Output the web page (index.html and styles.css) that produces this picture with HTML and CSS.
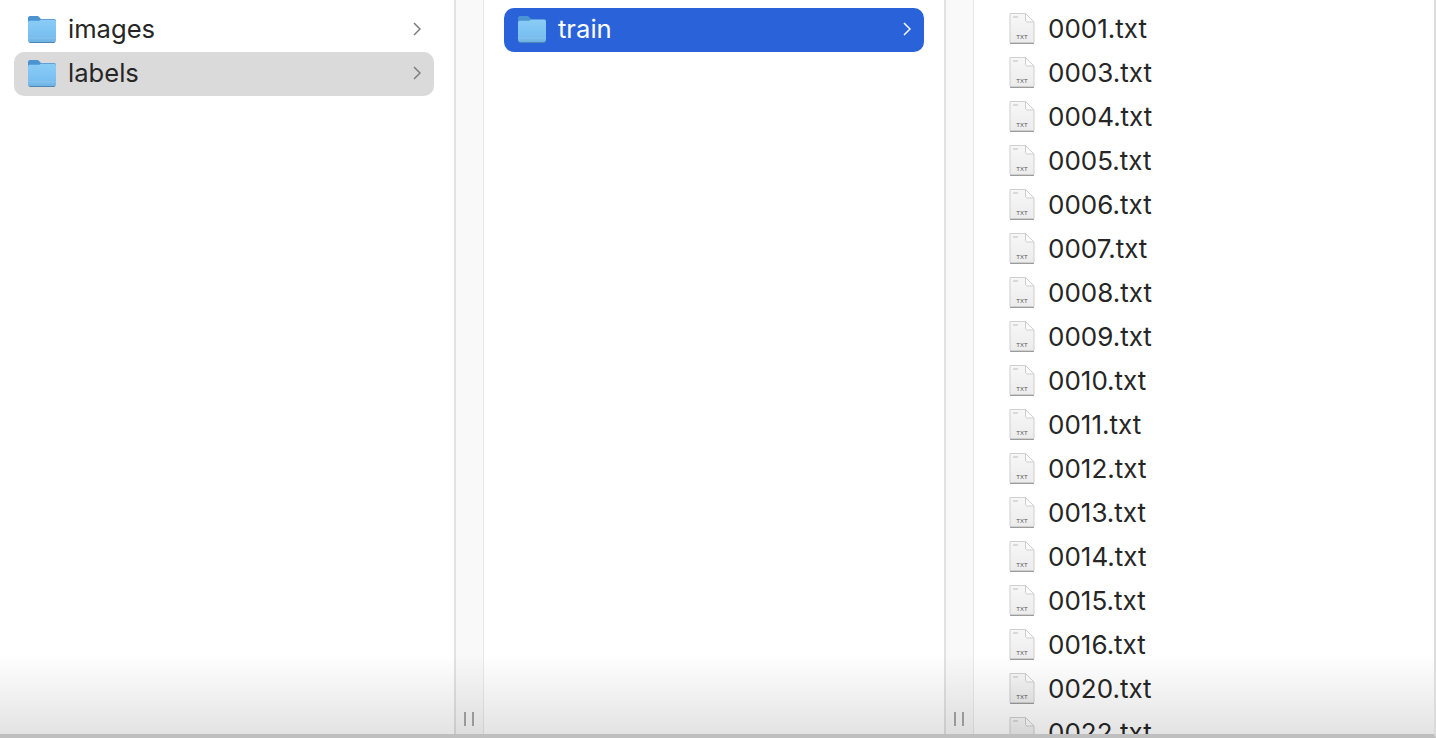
FILE: index.html
```html
<!DOCTYPE html>
<html lang="en">
<head>
    <meta charset="UTF-8">
    <meta name="viewport" content="width=device-width, initial-scale=1.0">
    <title>Finder</title>
    <link rel="stylesheet" href="styles.css">
</head>
<body>
    <!-- Shared icons -->
    <svg class="defs" width="0" height="0">
        <defs>
            <linearGradient id="folderFront" x1="0" y1="0" x2="0" y2="1">
                <stop offset="0" stop-color="#8accf5"/>
                <stop offset="0.72" stop-color="#79c0f1"/>
                <stop offset="0.74" stop-color="#69aee2"/>
                <stop offset="0.76" stop-color="#84c4f0"/>
                <stop offset="1" stop-color="#6cb1e3"/>
            </linearGradient>
            <linearGradient id="filePaper" x1="0" y1="0" x2="0" y2="1">
                <stop offset="0" stop-color="#f7f7f7"/>
                <stop offset="1" stop-color="#ececec"/>
            </linearGradient>
            <symbol id="folder" viewBox="0 0 30 28">
                <path d="M1 6.500V3.200C1 2 1.800 1 3 1h7c1 0 1.600.4 2.300 1.200L14 4h13c1.200 0 2 .8 2 2v2H1z" fill="#4c93d2"/>
                <path d="M1 8c0-1.500.9-2.300 2-2.300h8.500c1 0 1.500-.3 2.200-1h13.300c1.200 0 2 .8 2 2V25c0 1.200-.8 2-2 2H3c-1.200 0-2-.8-2-2z" fill="url(#folderFront)"/>
                <path d="M1.500 26.600c.4.600 1 .9 1.500.9h24c.6 0 1.200-.3 1.500-.9" fill="none" stroke="#4f86b8" stroke-width="1"/>
            </symbol>
            <symbol id="file" viewBox="0 0 26 32">
                <path d="M1 1.500h15.500L25 10v20.500H1z" fill="url(#filePaper)" stroke="#cfcfcf" stroke-width="1"/>
                <path d="M16.500 1.500V8c0 1.300.7 2 2 2H25z" fill="#fdfdfd" stroke="#cfcfcf" stroke-width="1"/>
                <path d="M1 31.500h24" stroke="#9c9c9c" stroke-width="1"/>
                <path d="M4 5h5" stroke="#bdbdbd" stroke-width="1"/>
                <text x="13" y="27" text-anchor="middle" font-family="Liberation Sans, sans-serif" font-size="6" fill="#555">TXT</text>
            </symbol>
        </defs>
    </svg>

    <div class="finder">
        <div class="column column-first">
            <div class="row">
                <svg class="folder-icon"><use href="#folder"/></svg>
                <span class="name">images</span>
                <span class="chevron"><svg width="8" height="14" viewBox="0 0 8 14"><path d="M1 1l6 6-6 6"/></svg></span>
            </div>
            <div class="row row-inactive">
                <svg class="folder-icon"><use href="#folder"/></svg>
                <span class="name">labels</span>
                <span class="chevron"><svg width="8" height="14" viewBox="0 0 8 14"><path d="M1 1l6 6-6 6"/></svg></span>
            </div>
        </div>
        <div class="gutter"><span class="grip"></span></div>

        <div class="column">
            <div class="row row-active">
                <svg class="folder-icon"><use href="#folder"/></svg>
                <span class="name">train</span>
                <span class="chevron"><svg width="8" height="14" viewBox="0 0 8 14"><path d="M1 1l6 6-6 6"/></svg></span>
            </div>
        </div>
        <div class="gutter"><span class="grip"></span></div>

        <div class="column column-files">
            <div class="row file-row"><svg class="file-icon"><use href="#file"/></svg><span class="name">0001.txt</span></div>
            <div class="row file-row"><svg class="file-icon"><use href="#file"/></svg><span class="name">0003.txt</span></div>
            <div class="row file-row"><svg class="file-icon"><use href="#file"/></svg><span class="name">0004.txt</span></div>
            <div class="row file-row"><svg class="file-icon"><use href="#file"/></svg><span class="name">0005.txt</span></div>
            <div class="row file-row"><svg class="file-icon"><use href="#file"/></svg><span class="name">0006.txt</span></div>
            <div class="row file-row"><svg class="file-icon"><use href="#file"/></svg><span class="name">0007.txt</span></div>
            <div class="row file-row"><svg class="file-icon"><use href="#file"/></svg><span class="name">0008.txt</span></div>
            <div class="row file-row"><svg class="file-icon"><use href="#file"/></svg><span class="name">0009.txt</span></div>
            <div class="row file-row"><svg class="file-icon"><use href="#file"/></svg><span class="name">0010.txt</span></div>
            <div class="row file-row"><svg class="file-icon"><use href="#file"/></svg><span class="name">0011.txt</span></div>
            <div class="row file-row"><svg class="file-icon"><use href="#file"/></svg><span class="name">0012.txt</span></div>
            <div class="row file-row"><svg class="file-icon"><use href="#file"/></svg><span class="name">0013.txt</span></div>
            <div class="row file-row"><svg class="file-icon"><use href="#file"/></svg><span class="name">0014.txt</span></div>
            <div class="row file-row"><svg class="file-icon"><use href="#file"/></svg><span class="name">0015.txt</span></div>
            <div class="row file-row"><svg class="file-icon"><use href="#file"/></svg><span class="name">0016.txt</span></div>
            <div class="row file-row"><svg class="file-icon"><use href="#file"/></svg><span class="name">0020.txt</span></div>
            <div class="row file-row"><svg class="file-icon"><use href="#file"/></svg><span class="name">0022.txt</span></div>
        </div>

        <!-- Bottom shade lies over all the columns -->
        <div class="shade"></div>
    </div>
</body>
</html>
```

FILE: styles.css
```css
body {
    margin: 0;
    padding: 0;
    height: 738px;
    overflow: hidden;
    background: #fff;
    font-family: Inter, "Noto Sans", sans-serif;
    color: #262626;
}

.defs {
    position: absolute;
}

.finder {
    position: relative;
    display: flex;
    height: 734px;
    border-bottom: 4px solid #bfbfbf;
    border-right: 2px solid #dcdcdc;
    overflow: hidden;
}

.column {
    width: 420px;
    flex: none;
    padding: 8px 20px 0;
}

.column-first {
    width: 420px;
    padding-left: 14px;
}

.column-files {
    flex: 1;
    padding-left: 22px;
}

.gutter {
    width: 27px;
    flex: none;
    display: flex;
    align-items: flex-end;
    justify-content: center;
    padding-bottom: 8px;
    background: #f9f9f9;
    border-left: 2px solid #e2e2e2;
    border-right: 1px solid #e8e8e8;
}

.grip {
    width: 6px;
    height: 14px;
    margin-right: 1px;
    border-left: 2px solid #999;
    border-right: 2px solid #999;
    position: relative;
    z-index: 2;
}

.row {
    display: flex;
    align-items: center;
    box-sizing: border-box;
    height: 44px;
    padding: 0 13px 2px 13px;
    border-radius: 10px;
    font-size: 25.6px;
}

.file-row {
    font-size: 26px;
}

.row-inactive {
    background: #dadada;
}

.row-active {
    background: #2a63d9;
    color: #fff;
}

.folder-icon {
    width: 30px;
    height: 28px;
    flex: none;
    margin-right: 11px;
}

.file-icon {
    width: 26px;
    height: 32px;
    flex: none;
    margin-right: 13px;
    margin-bottom: 2px;
}

.name {
    flex: 1;
    margin-bottom: 2px;
}

.chevron {
    display: flex;
}

.chevron path {
    fill: none;
    stroke: #7d7d7d;
    stroke-width: 1.5;
}

.row-active .chevron path {
    stroke: #fff;
}

.shade {
    position: absolute;
    left: 0;
    right: 0;
    bottom: 0;
    height: 80px;
    background: linear-gradient(to bottom, rgba(0, 0, 0, 0), rgba(0, 0, 0, 0.11));
    pointer-events: none;
}
```
